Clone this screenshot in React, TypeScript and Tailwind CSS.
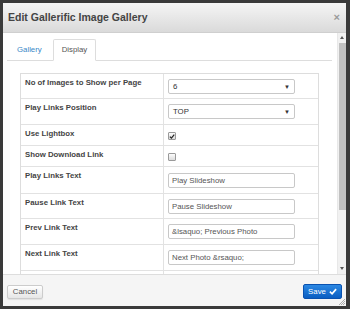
import React from "react";

type Row = {
  label: string;
  kind: "select" | "check" | "text" | "empty";
  value?: string;
  checked?: boolean;
  h: number;
  top: number;
};

const rows: Row[] = [
  { label: "No of Images to Show per Page", kind: "select", value: "6", h: 25, top: 5 },
  { label: "Play Links Position", kind: "select", value: "TOP", h: 26, top: 5 },
  { label: "Use Lightbox", kind: "check", checked: true, h: 21, top: 7 },
  { label: "Show Download Link", kind: "check", checked: false, h: 21, top: 7 },
  { label: "Play Links Text", kind: "text", value: "Play Slideshow", h: 27, top: 6 },
  { label: "Pause Link Text", kind: "text", value: "Pause Slideshow", h: 25, top: 5 },
  { label: "Prev Link Text", kind: "text", value: "&lsaquo; Previous Photo", h: 26, top: 5 },
  { label: "Next Link Text", kind: "text", value: "Next Photo &rsaquo;", h: 26, top: 5 },
  { label: "", kind: "empty", h: 26, top: 5 },
];

function Value({ r }: { r: Row }) {
  if (r.kind === "empty") return null;
  if (r.kind === "select") {
    return (
      <div className="w-[127px] h-[15px] border border-[#c8c8c8] rounded-[2px] bg-white flex items-center justify-between pl-[4px] pr-[4px] text-[#333]">
        <span className="text-[7.8px] leading-none">{r.value}</span>
        <span className="text-[6px] leading-none">▼</span>
      </div>
    );
  }
  if (r.kind === "check") {
    return (
      <div className="w-[8px] h-[8px] border border-[#9a9a9a] rounded-[1px] bg-gradient-to-b from-[#fcfcfc] to-[#dcdcdc] flex items-center justify-center">
        {r.checked && (
          <svg width="7" height="7" viewBox="0 0 10 10">
            <path d="M1.5 5.2 L4 7.8 L8.8 1.8" fill="none" stroke="#222" strokeWidth="2" />
          </svg>
        )}
      </div>
    );
  }
  return (
    <div className="w-[127px] h-[15px] border border-[#c8c8c8] rounded-[2px] bg-white flex items-center pl-[3px] text-[#555]">
      <span className="text-[7.8px] leading-none whitespace-nowrap">{r.value}</span>
    </div>
  );
}

export default function App() {
  return (
    <div
      className="w-[350px] h-[309px] bg-[#3a3a3a] pt-[3px] pl-[3px] pr-[4px] pb-[3px] overflow-hidden"
      style={{ fontFamily: '"Liberation Sans", Arial, sans-serif' }}
    >
      <div className="w-full h-full flex flex-col bg-white">
        {/* header */}
        <div className="h-[30px] shrink-0 flex items-center justify-between pl-[5px] pr-[6px] bg-gradient-to-b from-[#f5f5f5] to-[#dadada] border-b border-[#cfcfcf]">
          <span className="text-[10.5px] font-bold text-[#444] leading-none">Edit Gallerific Image Gallery</span>
          <span className="text-[11px] font-bold text-[#9a9a9a] leading-none">×</span>
        </div>
        {/* body */}
        <div className="h-[241px] shrink-0 flex overflow-hidden">
          <div className="flex-1 overflow-hidden pt-[6px]">
            <div className="ml-[4px] mr-[5px] flex items-end h-[22px] border-b border-[#dddddd] pl-[2px] gap-[3px]">
              <div className="h-[21px] px-[8px] flex items-center text-[7.8px] text-[#3a87c7]">Gallery</div>
              <div className="h-[22px] -mb-px px-[8px] flex items-center text-[7.8px] text-[#555] bg-white border border-[#dddddd] border-b-white rounded-t-[2px]">
                Display
              </div>
            </div>
            <div className="ml-[17px] mr-[18px] mt-[12px] border border-[#dddddd] border-b-0">
              {rows.map((r, i) => (
                <div key={i} className="flex border-b border-[#e2e2e2]" style={{ height: r.h }}>
                  <div className="w-[143px] shrink-0 border-r border-[#e2e2e2] pl-[4px] pt-[4px] text-[7.8px] leading-[10px] font-bold text-[#444]">
                    {r.label}
                  </div>
                  <div className="flex-1 pl-[4px]" style={{ paddingTop: r.top }}>
                    <Value r={r} />
                  </div>
                </div>
              ))}
            </div>
          </div>
          {/* scrollbar */}
          <div className="w-[9px] shrink-0 bg-[#f1f1f1] flex flex-col items-center border-l border-[#e8e8e8]">
            <div className="h-[9px] flex items-center justify-center">
              <div className="w-0 h-0 border-l-[2.5px] border-r-[2.5px] border-b-[3px] border-l-transparent border-r-transparent border-b-[#555]" />
            </div>
            <div className="w-[7px] h-[167px] bg-[#c1c1c1] mt-[1px]" />
            <div className="flex-1" />
            <div className="h-[9px] flex items-center justify-center mb-[1px]">
              <div className="w-0 h-0 border-l-[2.5px] border-r-[2.5px] border-t-[3px] border-l-transparent border-r-transparent border-t-[#555]" />
            </div>
          </div>
        </div>
        {/* footer */}
        <div className="flex-1 relative bg-[#f5f5f5] border-t border-[#dddddd] flex items-start justify-between pl-[4px] pr-[4px] pt-[9px]">
          <div className="mt-[1px] w-[36px] h-[14px] border border-[#cccccc] rounded-[2px] bg-gradient-to-b from-white to-[#e6e6e6] shadow-[0_1px_1px_rgba(0,0,0,0.08)] flex items-center justify-center text-[7.8px] text-[#555]">
            Cancel
          </div>
          <div className="w-[39px] h-[15px] border border-[#0a52b0] rounded-[2px] bg-gradient-to-b from-[#2b88e3] to-[#0a5ec2] flex items-center justify-center gap-[3px] text-[7.8px] text-white">
            <span>Save</span>
            <svg width="8" height="7" viewBox="0 0 10 9">
              <path d="M1 4.8 L3.8 7.4 L9 1.4" fill="none" stroke="#fff" strokeWidth="2.2" />
            </svg>
          </div>
          <svg className="absolute right-[1px] bottom-[1px]" width="6" height="6" viewBox="0 0 6 6">
            <path d="M6 0 L0 6 M6 2 L2 6 M6 4 L4 6" stroke="#999" strokeWidth="0.8" />
          </svg>
        </div>
      </div>
    </div>
  );
}
